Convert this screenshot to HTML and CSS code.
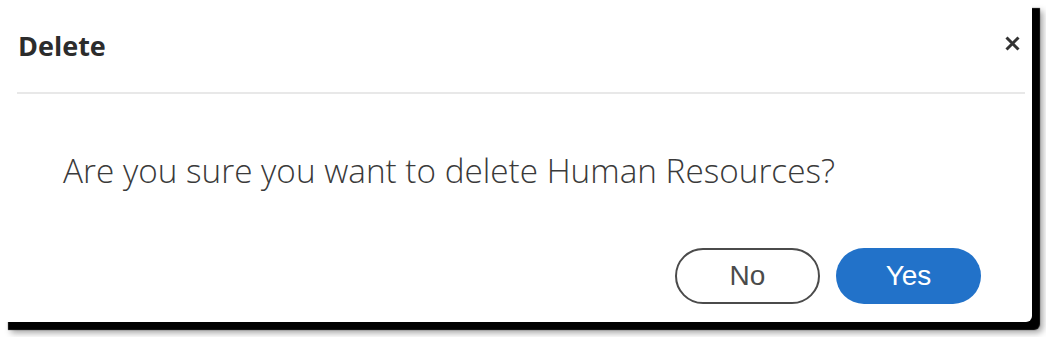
FILE: index.html
```html
<!DOCTYPE html>
<html>
<head>
<meta charset="utf-8">
<link rel="stylesheet" href="styles.css">
</head>
<body>
<div class="dialog">
  <div class="header">
    <h1 class="title">Delete</h1>
    <button class="close" aria-label="Close">
      <svg width="17" height="17" viewBox="0 0 17 17"><path d="M2.5 2.5 L14.5 14.5 M14.5 2.5 L2.5 14.5" stroke="#333" stroke-width="3" stroke-linecap="butt"/></svg>
    </button>
  </div>
  <div class="divider"></div>
  <p class="message">Are you sure you want to delete Human Resources?</p>
  <div class="actions">
    <button class="btn btn-no">No</button>
    <button class="btn btn-yes">Yes</button>
  </div>
</div>
</body>
</html>
```
FILE: styles.css
```css
html, body {
  margin: 0;
  padding: 0;
  background: #ffffff;
}
body {
  padding-bottom: 15px;
}
.dialog {
  width: 1032px;
  height: 322px;
  box-sizing: border-box;
  background: #ffffff;
  box-shadow: 8px 8px 1px #000000, 11px 11px 6px rgba(0,0,0,0.35);
  border-radius: 0 0 6px 0;
  display: flex;
  flex-direction: column;
  padding: 0 7px 0 17px;
}
.header {
  height: 92px;
  display: flex;
  align-items: center;
  justify-content: space-between;
}
.title {
  margin: 0 0 2px 1px;
  font-family: "Open Sans", sans-serif;
  font-weight: 700;
  font-size: 27px;
  color: #2c2c2c;
}
.close {
  border: 0;
  background: none;
  padding: 0;
  width: 17px;
  height: 17px;
  margin: 0 4px 6px 0;
  display: flex;
}
.divider {
  height: 2px;
  background: #e8e8e8;
}
.message {
  margin: 56px 0 0 46px;
  font-family: "Open Sans", sans-serif;
  font-weight: 300;
  font-size: 33.3px;
  color: #3a3a3a;
  line-height: 40px;
}
.actions {
  display: flex;
  justify-content: flex-end;
  gap: 16px;
  margin-top: 58px;
  padding-right: 44px;
}
.btn {
  width: 145px;
  height: 56px;
  border-radius: 28px;
  font-family: "Liberation Sans", Arial, sans-serif;
  font-size: 28px;
  box-sizing: border-box;
  padding: 0;
}
.btn-no {
  background: #ffffff;
  border: 2px solid #4b4b4b;
  color: #4b4b4b;
}
.btn-yes {
  background: #2272c9;
  border: 0;
  color: #ffffff;
}
```
